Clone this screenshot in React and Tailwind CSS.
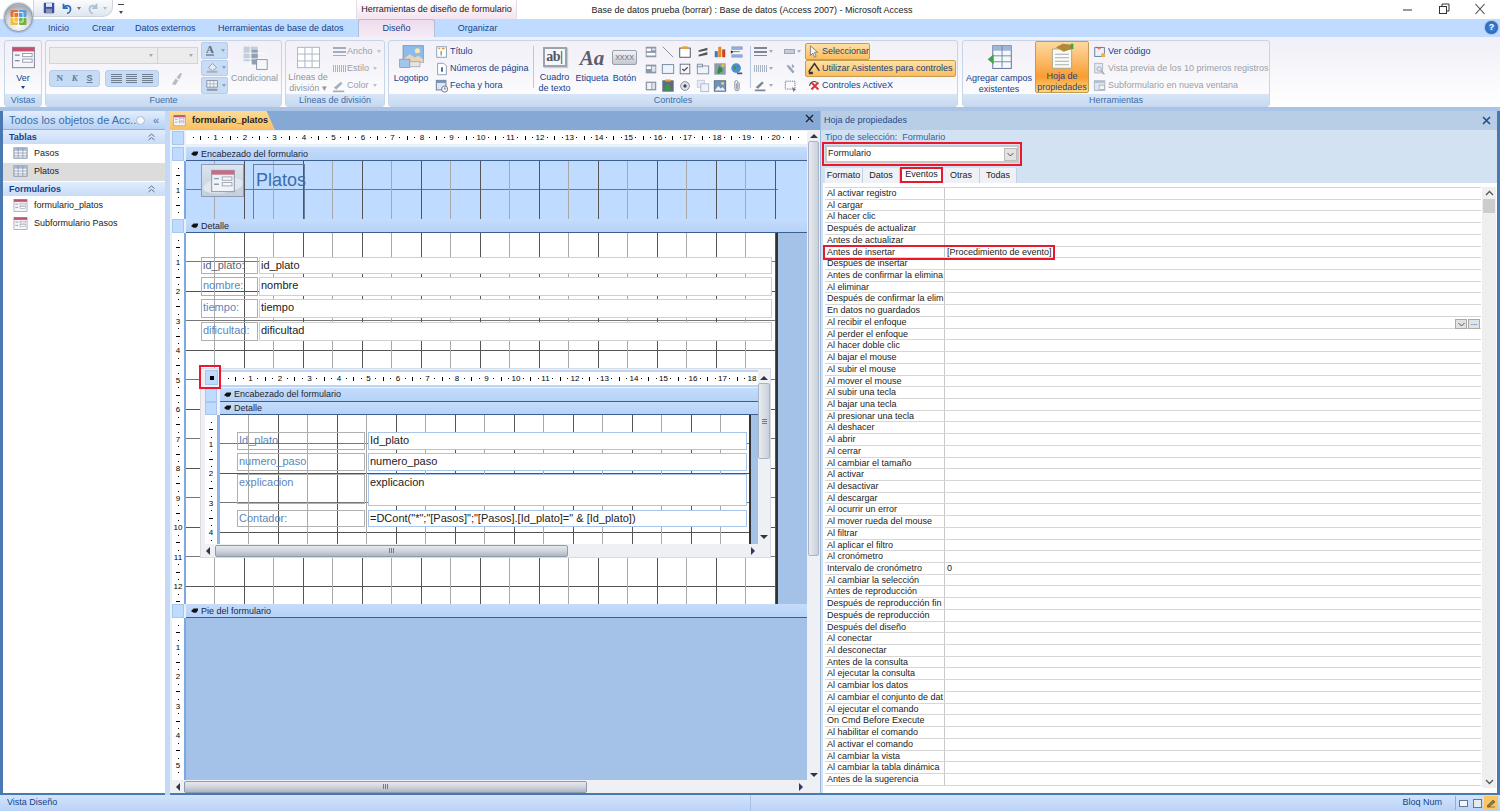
const GRID =
  "bg-[linear-gradient(to_right,transparent_28.5px,#a8a8a8_28.5px,#a8a8a8_29.5px,transparent_29.5px,transparent_58px,#555_58px),linear-gradient(to_bottom,transparent_28.5px,#777_28.5px,#777_29.5px,transparent_29.5px,transparent_58px,#555_58px)] bg-[size:59px_59px]";

const EVENTS = [
  "Al activar registro", "Al cargar", "Al hacer clic", "Después de actualizar", "Antes de actualizar",
  "Antes de insertar", "Después de insertar", "Antes de confirmar la elimina", "Al eliminar",
  "Después de confirmar la elim", "En datos no guardados", "Al recibir el enfoque", "Al perder el enfoque",
  "Al hacer doble clic", "Al bajar el mouse", "Al subir el mouse", "Al mover el mouse", "Al subir una tecla",
  "Al bajar una tecla", "Al presionar una tecla", "Al deshacer", "Al abrir", "Al cerrar", "Al cambiar el tamaño",
  "Al activar", "Al desactivar", "Al descargar", "Al ocurrir un error", "Al mover rueda del mouse", "Al filtrar",
  "Al aplicar el filtro", "Al cronómetro", "Intervalo de cronómetro", "Al cambiar la selección",
  "Antes de reproducción", "Después de reproducción fin", "Después de reproducción", "Después del diseño",
  "Al conectar", "Al desconectar", "Antes de la consulta", "Al ejecutar la consulta", "Al cambiar los datos",
  "Al cambiar el conjunto de dat", "Al ejecutar el comando", "On Cmd Before Execute", "Al habilitar el comando",
  "Al activar el comando", "Al cambiar la vista", "Al cambiar la tabla dinámica", "Antes de la sugerencia",
];

function Svg({ s = 16, children, className = "" }) {
  return (
    <svg width={s} height={s} viewBox="0 0 16 16" className={`shrink-0 ${className}`}>
      {children}
    </svg>
  );
}

function FormIcon({ s = 16 }) {
  return (
    <Svg s={s}>
      <rect x="1" y="1.5" width="14" height="13" fill="#f4f6fa" stroke="#8a92a5" strokeWidth="0.7" />
      <rect x="1" y="1.5" width="14" height="2.6" fill="#c2506f" />
      <path d="M2.5 6.5h3M2.5 10h3" stroke="#7d8798" strokeWidth="0.8" />
      <rect x="7.5" y="5.5" width="6" height="2" fill="#fff" stroke="#7d8798" strokeWidth="0.5" />
      <rect x="7.5" y="9" width="6" height="2" fill="#fff" stroke="#7d8798" strokeWidth="0.5" />
    </Svg>
  );
}

function TableIcon() {
  return (
    <Svg s={15}>
      <rect x="1" y="2" width="14" height="11" fill="#f3f6fb" stroke="#7f8ea6" />
      <rect x="1" y="2" width="14" height="3" fill="#a5b7d3" />
      <path d="M5.5 2v11M10.5 2v11M1 7.5h14M1 10.5h14" stroke="#7f8ea6" strokeWidth="0.7" />
    </Svg>
  );
}

function Caret({ className = "" }) {
  return <span className={`inline-block w-0 h-0 border-x-[2.5px] border-x-transparent border-t-[3px] border-t-current ${className}`} />;
}

function SmallBtn({ icon, label, off, caret, active, w }) {
  return (
    <div
      className={`flex items-center h-[17px] gap-[1px] px-[2px] whitespace-nowrap rounded-[2px] ${off ? "text-[#9a9fa8]" : "text-[#15428b]"} ${active ? "bg-[linear-gradient(#fde2a6,#fbbd5e)] border border-[#c79c4e] !text-[#1d3f7a]" : ""} ${w || ""}`}
    >
      {icon}
      <span>{label}</span>
      {caret && <Caret className="ml-[3px] opacity-60" />}
    </div>
  );
}

function BigBtn({ icon, lines, w, off }) {
  return (
    <div className={`${w} h-[52px] flex flex-col items-center pt-[3px] leading-[10.500px] text-center ${off ? "text-[#8f96a0]" : "text-[#15428b]"}`}>
      <div className="h-[27px] flex items-center justify-center">{icon}</div>
      <div className="mt-[2px]">
        {lines.map((l) => (
          <div key={l} className="whitespace-nowrap">{l}</div>
        ))}
      </div>
    </div>
  );
}

function Group({ w, label, children }) {
  return (
    <div className={`${w} h-[67px] flex flex-col rounded-[3px] border border-[#c6d5e8] bg-[linear-gradient(#f3f0f8,#f6f5fa_45%,#ffffff)] overflow-hidden shrink-0`}>
      <div className="h-[53px] flex">{children}</div>
      <div className="flex-1 bg-[linear-gradient(#d7e5f6,#c6daf2)] text-center text-[#3e6cab] leading-[12px]">{label}</div>
    </div>
  );
}

function Sep() {
  return <div className="w-px h-[42px] mt-[5px] bg-[#b9cbe2] shrink-0" />;
}

// tiny icons of the Controles grid, row by row
const G = "#6d7788";
const CONTROL_ICONS = [
  <><rect x="2" y="2" width="12" height="12" fill="#8b98ab" /><rect x="3" y="4" width="5" height="3" fill="#fff" /><rect x="9" y="4" width="4" height="2" fill="#dfe6f0" /><rect x="3" y="9" width="10" height="3" fill="#fff" /></>,
  <path d="M2 2l12 12" stroke={G} strokeWidth="0.9" />,
  <><rect x="2" y="3.5" width="12" height="10.5" fill="#fff" stroke="#444" /><rect x="5" y="1.5" width="6" height="3" fill="#e8a33a" /></>,
  <path d="M3 6l10-3v3l-10 2zM3 11l10-3v3l-10 2z" fill="#555" />,
  <><rect x="2" y="7" width="3.5" height="7" fill="#3a78c9" /><rect x="6" y="2" width="3.5" height="12" fill="#e58b1f" /><rect x="10.500" y="5" width="3.5" height="9" fill="#c9431f" /></>,
  <><path d="M2 2h12v3H2zM2 11h12v3H2z" fill="#8fb1de" stroke="#6482ad" strokeWidth="0.5" /><path d="M2 7.500h9" stroke="#777" /><path d="M1 6l3 2-3 2z" fill="#333" /></>,
  <><rect x="2" y="3" width="12" height="10" fill="#8b98ab" /><rect x="3" y="5" width="5" height="3" fill="#fff" /><rect x="9" y="5" width="4" height="6" fill="#dfe6f0" /></>,
  <rect x="1.500" y="3" width="13" height="10" fill="#eef4fc" stroke="#69809f" />,
  <><rect x="2.500" y="2.500" width="11" height="11" fill="#f6f6f6" stroke="#667" /><path d="M5 8l2 2 4-4" stroke="#445" fill="none" strokeWidth="1.300" /></>,
  <><rect x="1.500" y="4.500" width="13" height="9" fill="#eef3fa" stroke="#7a8ba3" /><rect x="1.500" y="2.500" width="6" height="3" fill="#dfe7f3" stroke="#7a8ba3" /></>,
  <><rect x="1.500" y="1.500" width="13" height="13" fill="#8e9aac" /><path d="M5 13c0-4 1-7 3-9 0 3 3 2 3 5s-3 2-3 4z" fill="#2e8f3a" /><rect x="10" y="2.500" width="3" height="3" fill="#e9c54a" /></>,
  <><circle cx="7" cy="7" r="5.500" fill="#4f8fd6" /><path d="M4 4c2 0 3 1 3 3S5 9 4 8zM8 3l3 2-2 2z" fill="#3e9a4c" /><path d="M8 12h6v2H8z" fill="#556" /></>,
  <><rect x="2" y="3" width="12" height="10" fill="#8b98ab" /><rect x="3.500" y="4.500" width="5" height="7" fill="#f3f3f3" /><rect x="9.500" y="4.500" width="3" height="7" fill="#dfe6f0" /></>,
  <><rect x="1.500" y="1.500" width="13" height="13" fill="#5f6c7f" /><path d="M4 13c0-4 2-7 4-8 1 3 4 4 3 8z" fill="#3c9a46" /><rect x="5" y="0.500" width="6" height="2.500" fill="#e2a23a" /></>,
  <><circle cx="8" cy="8" r="5" fill="#dfe3ea" stroke="#7b8596" /><circle cx="8" cy="8" r="2" fill="#3e4a5c" /></>,
  <><rect x="1.500" y="1.500" width="8" height="8" fill="#e6ecf5" stroke="#c3ccd9" /><rect x="5.500" y="5.500" width="9" height="9" fill="#eef2f8" stroke="#a9b5c6" /></>,
  <><rect x="1.500" y="2" width="13" height="12" fill="#6f93bf" stroke="#5a6a80" /><path d="M2 13l4-5 3 3 2-2 3 4z" fill="#f2f2f2" /><circle cx="11" cy="5" r="1.500" fill="#f5d76a" /></>,
  <path d="M10.500 4v7a2.500 2.500 0 0 1-5 0V3.500a1.700 1.700 0 0 1 3.400 0V11a.8.8 0 0 1-1.600 0V5" fill="none" stroke="#7c8798" strokeWidth="1" />,
];

function OfficeOrb() {
  return (
    <div className="absolute left-[4px] top-[3px] w-[29px] h-[29px] rounded-full border border-[#8b96a5] bg-[radial-gradient(circle_at_50%_75%,#ffffff,#d6dbe3_45%,#a4acb8_75%,#eef0f4)] flex items-center justify-center shadow-[0_0_2px_#6f7c8c]">
      <svg width="19" height="19" viewBox="0 0 19 19">
        <rect x="1.500" y="2" width="7.500" height="7" rx="1" fill="#e8722a" />
        <rect x="10" y="2" width="7.500" height="7" rx="1" fill="#5c9ad8" />
        <rect x="1.500" y="10" width="7.500" height="7" rx="1" fill="#f1c232" />
        <rect x="10" y="10" width="7.500" height="7" rx="1" fill="#73b33e" />
        <path d="M5 4.500h9M5 14h9M5 4.500v9.500M14 4.500v9.500" stroke="#fff" strokeWidth="0.8" fill="none" />
      </svg>
    </div>
  );
}

function TitleBar() {
  return (
    <div className="h-[19px] flex bg-white shrink-0">
      <div className="w-[33px] shrink-0" />
      <div className="w-[80px] h-[17px] shrink-0 flex items-center gap-[3px] pl-[9px] rounded-br-[10px] border border-t-0 border-[#cdd5e0] bg-[linear-gradient(#fafbfd,#dfe6f0)]">
        <Svg s={12}>
          <rect x="1" y="1" width="14" height="14" rx="1" fill="#3d4f9e" />
          <rect x="4" y="1.500" width="8" height="5" fill="#dfe6f5" />
          <rect x="4" y="9" width="8" height="6" fill="#8a93b8" />
        </Svg>
        <Svg s={14} className="ml-[2px]">
          <path d="M4 3v5h5M4.500 7.500C7 4 12 5 12 9s-3 5-4 5" fill="none" stroke="#2f6cb8" strokeWidth="2" />
        </Svg>
        <Caret className="text-[#777]" />
        <Svg s={14} className="ml-[2px]">
          <path d="M12 3v5H7M11.500 7.500C9 4 4 5 4 9s3 5 4 5" fill="none" stroke="#a9bdd3" strokeWidth="2" />
        </Svg>
        <Caret className="text-[#bbb]" />
      </div>
      <div className="w-[243px] shrink-0 pl-[5px] pt-[4px]">
        <div className="w-[6px] h-px bg-[#445]" />
        <Caret className="block text-[#445] mt-px ml-[0.5px]" />
      </div>
      <div className="w-[161px] shrink-0 border-x border-[#e3dfe8] bg-[linear-gradient(#ffffff,#f4e3ee)] text-[#222] text-center leading-[19px] whitespace-nowrap">
        Herramientas de diseño de formulario
      </div>
      <div className="w-[470px] shrink-0 text-center text-[#222] leading-[20px] whitespace-nowrap">
        Base de datos prueba (borrar) : Base de datos (Access 2007) - Microsoft Access
      </div>
      <div className="flex-1 flex justify-end items-start pr-[13px] pt-[3px] gap-[22px] text-[#333]">
        <svg width="14" height="12" viewBox="0 0 14 12"><path d="M2 7h9" stroke="#555" strokeWidth="1.200" /></svg>
        <svg width="14" height="12" viewBox="0 0 14 12"><path d="M5 3V1h7v7h-2" fill="none" stroke="#333" /><rect x="2.500" y="3.500" width="7" height="7" fill="none" stroke="#333" /></svg>
        <svg width="14" height="12" viewBox="0 0 14 12"><path d="M2.500 1l9 10M11.500 1l-9 10" stroke="#444" strokeWidth="1.100" /></svg>
      </div>
    </div>
  );
}

function TabRow() {
  return (
    <div className="h-[18px] flex bg-[#bfdbff] text-[#15428b] shrink-0 leading-[18px] whitespace-nowrap relative">
      <div className="w-[48px]" />
      <div className="w-[44px]">Inicio</div>
      <div className="w-[43px]">Crear</div>
      <div className="w-[83px]">Datos externos</div>
      <div className="w-[140px]">Herramientas de base de datos</div>
      <div className="w-[77px] h-[18px] text-center border border-b-0 border-[#b3bfd8] rounded-t-[3px] bg-[linear-gradient(#efdcec,#f4ebf6)] leading-[17px]">Diseño</div>
      <div className="w-[85px] text-center">Organizar</div>
      <div className="flex-1 flex justify-end pr-[1px] pt-[1px]">
        <div className="w-[15px] h-[15px] rounded-full bg-[radial-gradient(circle,#4a8cdc,#1d58a8)] border border-[#a9c3e6] text-white text-[9px] leading-[13px] text-center font-bold">?</div>
      </div>
    </div>
  );
}

function Ribbon() {
  return (
    <div className="h-[70px] flex pt-[3px] pl-[4px] gap-[3px] bg-[linear-gradient(#f1eff7,#ffffff)] text-[#15428b] shrink-0">
      <Group w="w-[38px]" label="Vistas">
        <div className="w-full flex flex-col items-center pt-[4px] leading-[12px]">
          <FormIcon s={25} />
          <div className="mt-[2px]">Ver</div>
          <Caret className="mt-[2px]" />
        </div>
      </Group>

      <Group w="w-[237px]" label="Fuente">
        <div className="w-[155px] pl-[3px] pt-[6px] shrink-0">
          <div className="flex">
            <div className="w-[109px] h-[17px] border border-[#cfd5dd] bg-[#ececec] flex justify-end items-center pr-[4px] text-[#aaa]"><Caret /></div>
            <div className="w-[40px] h-[17px] border border-l-0 border-[#cfd5dd] bg-[#ececec] flex justify-end items-center pr-[4px] text-[#aaa]"><Caret /></div>
          </div>
          <div className="flex mt-[6px] gap-[5px]">
            <div className="w-[51px] h-[17px] rounded-[3px] border border-[#b7cde9] bg-[#c5dbf6] flex items-center justify-around px-[2px] font-bold text-[#6b7a8d]">
              <span className="[font-family:'Liberation_Serif',serif]">N</span>
              <span className="italic [font-family:'Liberation_Serif',serif]">K</span>
              <span className="underline">S</span>
            </div>
            <div className="w-[54px] h-[17px] rounded-[3px] border border-[#b7cde9] bg-[#c5dbf6] flex items-center justify-around px-[3px]">
              {["w-[11px]", "w-[11px]", "w-[11px]"].map((c, i) => (
                <div key={i} className={`${c} h-[9px] bg-[repeating-linear-gradient(#6f7d90_0_1px,transparent_1px_2px)]`} />
              ))}
            </div>
            <Svg s={15} className="ml-[5px] mt-px">
              <path d="M3 14l4-6 3 2-3 5zM8 7l4-5 2 1-3 6z" fill="#b6bdc8" />
            </Svg>
          </div>
        </div>
        <div className="w-[27px] pt-px flex flex-col gap-px shrink-0">
          {[
            <span key="a" className="font-bold text-[#5d6c80] text-[11px] leading-[10px] [font-family:'Liberation_Serif',serif] border-b-2 border-[#8d97a6]">A</span>,
            <Svg key="b" s={13}><path d="M3 8l5-5 5 5-5 4z" fill="#e7ecf3" stroke="#8994a5" /><rect x="1" y="12" width="13" height="2.500" fill="#a8b1bd" /></Svg>,
            <Svg key="c" s={13}><rect x="1" y="2" width="13" height="8" fill="#f0f3f8" stroke="#7e8899" /><path d="M5 2v8M9.500 2v8M1 6h13" stroke="#7e8899" strokeWidth="0.6" /><rect x="1" y="12" width="13" height="2.500" fill="#8d97a6" /></Svg>,
          ].map((ic, i) => (
            <div key={i} className="h-[16.500px] rounded-[2px] border border-[#b7cde9] bg-[#c8dcf5] flex items-center gap-[3px] pl-[4px] text-[#8ea0b8]">
              {ic}
              <Caret className="ml-auto mr-[2px]" />
            </div>
          ))}
        </div>
        <div className="flex-1">
          <BigBtn
            w="w-full"
            off
            lines={["Condicional"]}
            icon={
              <Svg s={26}>
                <rect x="1" y="1" width="9" height="9" fill="#c3cddb" />
                <rect x="6" y="3" width="4" height="9" fill="#8fa0b6" />
                <path d="M1 5h14M1 8.500h14M5 1v13M10 1v13" stroke="#fff" strokeWidth="0.5" />
                <rect x="9" y="9" width="6.500" height="6" fill="#f4f6f9" stroke="#7d8898" strokeWidth="0.5" />
              </Svg>
            }
          />
        </div>
      </Group>

      <Group w="w-[100px]" label="Líneas de división">
        <BigBtn
          w="w-[44px] shrink-0"
          off
          lines={["Líneas de", "división ▾"]}
          icon={
            <Svg s={25}>
              <rect x="1" y="1.500" width="14" height="13" fill="#fff" stroke="#a9b3c1" strokeWidth="0.6" />
              <path d="M5.700 1.500v13M10.300 1.500v13M1 5.800h14M1 10.200h14" stroke="#a9b3c1" strokeWidth="0.6" />
            </Svg>
          }
        />
        <div className="pt-[2px]">
          <SmallBtn off caret label="Ancho" icon={<div className="w-[13px] h-[9px] ml-px bg-[repeating-linear-gradient(#a3adbb_0_2px,transparent_2px_4px)]" />} />
          <SmallBtn off caret label="Estilo" icon={<div className="w-[13px] h-[7px] ml-px bg-[repeating-linear-gradient(90deg,#a8b4c5_0_1px,transparent_1px_2px)]" />} />
          <SmallBtn off caret label="Color" icon={<Svg s={14}><path d="M2 10l8-7 2 2-7 7zM1 13h13v2H1z" fill="#a6afbb" /></Svg>} />
        </div>
      </Group>

      <Group w="w-[570px]" label="Controles">
        <BigBtn
          w="w-[44px] shrink-0"
          lines={["Logotipo"]}
          icon={
            <Svg s={27}>
              <rect x="3" y="1" width="12" height="10" fill="#8dbbec" stroke="#7990ad" strokeWidth="0.5" />
              <path d="M3 9l4-3 3 2 2-1 3 2v2H3z" fill="#e9d5b6" />
              <circle cx="11.500" cy="4" r="1.500" fill="#fbe9a0" />
              <rect x="1" y="9" width="6" height="5" fill="#a5c6ec" stroke="#7990ad" strokeWidth="0.4" />
              <rect x="7" y="10.500" width="6" height="3" fill="#e4e4e4" stroke="#99a" strokeWidth="0.4" />
            </Svg>
          }
        />
        <div className="w-[96px] pt-[2px] shrink-0">
          <SmallBtn label="Título" icon={<Svg s={14}><rect x="2" y="2" width="11" height="12" fill="#fff" stroke="#8494a9" /><path d="M4 4h2M8 4h3" stroke="#d59a2d" strokeWidth="1.500" /><path d="M7 7v5" stroke="#555" /></Svg>} />
          <SmallBtn label="Números de página" icon={<Svg s={14}><path d="M3 1.500h7l3 3v10H3z" fill="#fff" stroke="#8494a9" /><path d="M7 6h2v5H7z" fill="#3a5f9e" /></Svg>} />
          <SmallBtn label="Fecha y hora" icon={<Svg s={14}><rect x="1.500" y="1.500" width="11" height="11" fill="#dde7f5" stroke="#5d7191" /><rect x="1.500" y="1.500" width="11" height="3" fill="#7b93b8" /><circle cx="11" cy="11.500" r="3.500" fill="#f3f5f9" stroke="#5d7191" /><path d="M11 9.500v2h1.500" stroke="#334" strokeWidth="0.7" fill="none" /></Svg>} />
        </div>
        <div className="w-[4px] shrink-0" />
        <Sep />
        <BigBtn
          w="w-[41px] shrink-0"
          lines={["Cuadro", "de texto"]}
          icon={<div className="w-[24px] h-[20px] border-2 border-[#9aa3af] bg-[#f7f7f7] text-[#4d5563] font-bold text-[14px] leading-[15px] text-center [font-family:'Liberation_Serif',serif] tracking-[-0.5px] shadow-[1px_1px_1px_#ccc]">ab|</div>}
        />
        <BigBtn w="w-[34px] shrink-0" lines={["Etiqueta"]} icon={<span className="italic font-bold text-[21px] leading-[24px] text-[#5a5f68] [font-family:'Liberation_Serif',serif]">Aa</span>} />
        <BigBtn w="w-[31px] shrink-0" lines={["Botón"]} icon={<div className="w-[25px] h-[15px] rounded-[2px] border border-[#98a1ad] bg-[linear-gradient(#f0f1f3,#c4c9d0)] text-[7px] leading-[13px] text-center text-[#667]">XXXX</div>} />
        <div className="w-[106px] pl-[2px] pt-[2px] grid grid-cols-6 grid-rows-3 shrink-0">
          {CONTROL_ICONS.map((ic, i) => (
            <div key={i} className="w-[17px] h-[17px] flex items-center justify-center">
              <Svg s={14}>{ic}</Svg>
            </div>
          ))}
        </div>
        <div className="w-[4px] shrink-0" />
        <Sep />
        <div className="w-[54px] pl-[3px] pt-[2px] grid grid-cols-2 shrink-0">
          <div className="h-[17px] flex items-center gap-[2px] text-[#aab]"><div className="w-[13px] h-[9px] bg-[repeating-linear-gradient(#7d8797_0_2px,transparent_2px_4px)]" /><Caret /></div>
          <div className="h-[17px] flex items-center gap-[2px] text-[#aab] pl-[4px]"><div className="w-[11px] h-[5px] bg-[#c4cedb] border border-[#9aa7b8]" /><Caret /></div>
          <div className="h-[17px] flex items-center gap-[2px] text-[#aab]"><div className="w-[13px] h-[7px] bg-[repeating-linear-gradient(90deg,#a8b4c5_0_1px,transparent_1px_2px)]" /><Caret /></div>
          <div className="h-[17px] flex items-center pl-[4px]"><Svg s={14}><path d="M3 3l3 1 6 7-2 2-6-7zM9 2l3 3-3 2z" fill="#9ba6b5" /></Svg></div>
          <div className="h-[17px] flex items-center gap-[2px] text-[#aab]"><Svg s={13}><path d="M2 10l8-7 2 2-7 7zM1 13h13v2H1z" fill="#7d8797" /></Svg><Caret /></div>
          <div className="h-[17px] flex items-center pl-[4px]"><Svg s={14}><rect x="1.500" y="2.500" width="11" height="9" fill="none" stroke="#667" strokeDasharray="1.500 1" /><path d="M9 9l5 3-2 1-1 2z" fill="#778" /></Svg></div>
        </div>
        <div className="flex-1 pt-[2px] min-w-0">
          <div className="w-[65px]">
            <SmallBtn active label="Seleccionar" icon={<Svg s={13}><path d="M3 1l9 8H8l2 5-2 1-2-5-3 3z" fill="#f4f5f8" stroke="#556" strokeWidth="0.8" /></Svg>} />
          </div>
          <div className="w-[151px]">
            <SmallBtn active label="Utilizar Asistentes para controles" icon={<Svg s={13}><path d="M1 12L8 2l6 9" fill="none" stroke="#333" strokeWidth="1.800" /><rect x="1" y="12" width="5" height="3" fill="#333" /></Svg>} />
          </div>
          <SmallBtn label="Controles ActiveX" icon={<Svg s={14}><path d="M3 8a5 5 0 0 1 8-4" fill="none" stroke="#444" strokeWidth="1.200" /><path d="M5 4l8 8M13 4l-8 8" stroke="#d33" strokeWidth="2.200" /></Svg>} />
        </div>
      </Group>

      <Group w="w-[308px] ml-px" label="Herramientas">
        <BigBtn
          w="w-[72px] shrink-0"
          lines={["Agregar campos", "existentes"]}
          icon={
            <Svg s={27}>
              <rect x="4" y="1" width="11" height="13.500" fill="#f4f7fb" stroke="#667c9a" strokeWidth="0.6" />
              <rect x="4" y="1" width="11" height="3" fill="#9fb6d6" />
              <path d="M9.500 1v13M4 7h11M4 10.500h11" stroke="#667c9a" strokeWidth="0.5" />
              <path d="M1 9l3.500-3v6z" fill="#3aa845" />
            </Svg>
          }
        />
        <div className="w-[54px] h-[52px] shrink-0 border border-[#c49b50] rounded-[2px] bg-[linear-gradient(#fdd9a0,#fbb35c_45%,#fa9c30_70%,#fcd784)] flex flex-col items-center text-[#23467f] leading-[10.500px] text-center whitespace-nowrap">
          <Svg s={28}>
            <path d="M2.500 4h11v11h-11z" fill="#fbfbf6" stroke="#a39f8d" strokeWidth="0.5" />
            <path d="M4 7h8M4 9h8M4 11h8M4 13h8" stroke="#a7adb8" strokeWidth="0.6" />
            <path d="M4.500 3l4-2 5 .5V4L9 5.500z" fill="#b08a3a" />
            <rect x="13" y="1" width="1.500" height="3" fill="#3aa845" />
          </Svg>
          <div className="mt-[1px]">Hoja de</div>
          <div>propiedades</div>
        </div>
        <div className="pl-[2px] pt-[2px]">
          <SmallBtn label="Ver código" icon={<Svg s={14}><rect x="2" y="3" width="11" height="10" fill="#eef2f8" stroke="#5f7394" /><path d="M4 2l3 3M10 2L7 5" stroke="#c33" /><circle cx="11.500" cy="11.500" r="2.500" fill="#e9b73e" /></Svg>} />
          <SmallBtn off label="Vista previa de los 10 primeros registros" icon={<Svg s={14}><rect x="2" y="1.500" width="9" height="11" fill="#e5eaf2" stroke="#aab4c3" /><circle cx="7" cy="8" r="2.500" fill="none" stroke="#9aa6b7" /><path d="M9 10l4 4" stroke="#9aa6b7" strokeWidth="1.500" /></Svg>} />
          <SmallBtn off label="Subformulario en nueva ventana" icon={<Svg s={14}><rect x="1.500" y="2" width="12" height="11" fill="#dfe6ef" stroke="#a7b2c2" /><rect x="1.500" y="2" width="12" height="2.500" fill="#b5c0cf" /><rect x="7" y="7" width="6" height="5" fill="#f3f5f9" stroke="#a7b2c2" /></Svg>} />
        </div>
      </Group>
    </div>
  );
}

function NavSection({ label }) {
  return (
    <div className="h-[14px] flex items-center justify-between pl-[6px] pr-[10px] bg-[linear-gradient(#e0ecfc,#c9dcf7)] text-[#15428b] font-bold leading-[14px]">
      <span>{label}</span>
      <svg width="7" height="8" viewBox="0 0 7 8"><path d="M0.500 3.500l3-2.500 3 2.500M0.500 7l3-2.500 3 2.500" fill="none" stroke="#5c6f8c" /></svg>
    </div>
  );
}

function NavItem({ icon, label, on }) {
  return (
    <div className={`h-[18.500px] flex items-center pl-[10px] gap-[6px] text-[#222] ${on ? "bg-[#dcdcdc]" : ""}`}>
      {icon}
      <span>{label}</span>
    </div>
  );
}

function NavPane() {
  return (
    <div className="w-[162px] shrink-0 flex flex-col bg-white h-[682px]">
      <div className="h-[19px] flex items-center bg-[linear-gradient(#e3eefc,#b6d1f5)] border-b border-[#8eb0dc] pl-[6px] text-[#3a6ca8] text-[11px] whitespace-nowrap shrink-0">
        <span className="w-[126px]">Todos los objetos de Acc...</span>
        <span className="w-[9px] h-[9px] rounded-full bg-[#f4f7fb] border border-[#a9bcd6] ml-[1px]" />
        <span className="ml-[8px] leading-[11px] text-[#4f6f9c]">«</span>
      </div>
      <NavSection label="Tablas" />
      <NavItem icon={<TableIcon />} label="Pasos" />
      <NavItem on icon={<TableIcon />} label="Platos" />
      <div className="h-px" />
      <NavSection label="Formularios" />
      <NavItem icon={<FormIcon s={15} />} label="formulario_platos" />
      <NavItem icon={<FormIcon s={15} />} label="Subformulario Pasos" />
    </div>
  );
}

function HRuler({ n, w }) {
  return (
    <div className={`${w} h-[13px] bg-white flex pl-[3.700px] overflow-hidden shrink-0`}>
      {Array.from({ length: n }, (_, i) => (
        <div key={i} className="w-[29.500px] shrink-0 grid grid-cols-4 items-center justify-items-center">
          <div className="w-px h-px bg-black" />
          <div className="w-px h-[4px] bg-black" />
          <div className="w-px h-px bg-black" />
          <div className="text-[8px] leading-[13px] text-black">{i + 1 < n ? i + 1 : ""}</div>
        </div>
      ))}
    </div>
  );
}

function VRuler({ n, h, w = "w-[12px]" }) {
  return (
    <div className={`${w} ${h} bg-white pt-[3.700px] overflow-hidden shrink-0`}>
      {Array.from({ length: n }, (_, i) => (
        <div key={i} className="h-[29.500px] grid grid-rows-4 items-center justify-items-center">
          <div className="w-px h-px bg-black" />
          <div className="w-[4px] h-px bg-black" />
          <div className="w-px h-px bg-black" />
          <div className="text-[8px] leading-[8px] text-black">{i + 1 < n ? i + 1 : ""}</div>
        </div>
      ))}
    </div>
  );
}

function Band({ label, sub }) {
  return (
    <div className={`flex ${sub ? "h-[13.500px]" : "h-[14px]"} shrink-0`}>
      <div className="w-[12px] bg-[#bfdbff] border border-[#a9c7ee] shrink-0" />
      <div className={`${sub ? "w-[3px]" : "w-[2px]"} shrink-0`} />
      <div className={`flex-1 flex items-center gap-[3px] pt-px ${sub ? "pl-[4px]" : "pl-[5px]"} bg-[linear-gradient(#c5dcfb,#b6d2f8)] border-b border-[#3d5f8f] text-[#1d2633] leading-[13px] whitespace-nowrap`}>
        <svg width="7" height="8" viewBox="0 0 8 8" className="shrink-0"><path d="M0 4l3-3h5v2l-2 3H3z" fill="#111" /></svg>
        {label}
      </div>
    </div>
  );
}

function FieldLabel({ className, children, dark }) {
  return (
    <div className={`absolute border-[1.500px] border-[#b0b0b0] pl-[1px] ${dark ? "text-[#54657c]" : "text-[#5c86bd]"} text-[11px] leading-[14px] whitespace-nowrap ${className}`}>
      {children}
    </div>
  );
}

function FieldBox({ className, children, blue }) {
  return (
    <div className={`absolute bg-white border-[1.500px] ${blue ? "border-[#a9c5ea]" : "border-[#d0d0d0]"} pl-[1px] text-[#222] text-[11px] leading-[14px] whitespace-nowrap ${className}`}>
      {children}
    </div>
  );
}

function ScrollThumb({ w }) {
  return (
    <div className={`${w} h-[12px] rounded-[2px] border border-[#8c9bb2] bg-[linear-gradient(#e6e9ee,#cfd4dc_50%,#aeb6c2)] flex items-center justify-center gap-px shrink-0`}>
      <div className="w-px h-[5px] bg-[#778]" />
      <div className="w-px h-[5px] bg-[#778]" />
      <div className="w-px h-[5px] bg-[#778]" />
    </div>
  );
}

function ArrowL() {
  return <div className="w-0 h-0 border-y-[4px] border-y-transparent border-r-[4px] border-r-[#334]" />;
}

function ArrowR() {
  return <div className="w-0 h-0 border-y-[4px] border-y-transparent border-l-[4px] border-l-[#336]" />;
}

function Subform() {
  return (
    <div className="absolute left-[14px] top-[135px] w-[571px] h-[190px] flex bg-[#eef0f3] border border-[#d8dce2]">
      <div className="w-[557px] shrink-0 flex flex-col">
        <div className="h-[19px] flex shrink-0 pt-px">
          <div className="w-[4px] shrink-0" />
          <div className="w-[13px] h-[15px] shrink-0 bg-[#bfdbff] border border-[#a9c7ee] flex items-center justify-center">
            <div className="w-[4px] h-[4px] bg-black" />
          </div>
          <div className="w-[3px] shrink-0" />
          <div className="flex-1 min-w-0 h-[17px] border-y-2 border-[#bcd5f5] overflow-hidden">
            <HRuler n={19} w="w-full" />
          </div>
        </div>
        <div className="pl-[4px] flex flex-col shrink-0">
          <Band sub label="Encabezado del formulario" />
          <Band sub label="Detalle" />
        </div>
        <div className="flex flex-1 min-h-0 pl-[4px]">
          <VRuler n={5} h="h-full" />
          <div className="w-[3px] bg-[#8fb5e8] shrink-0" />
          <div className="flex-1 relative bg-[#a4c2e8] overflow-hidden">
            <div className={`w-[531px] h-full bg-white border-r-2 border-[#333] ${GRID}`} />
            <FieldLabel className="left-[17px] top-[17px] w-[128px] h-[18px]">Id_plato</FieldLabel>
            <FieldBox blue className="left-[148px] top-[17px] w-[379px] h-[18px]">Id_plato</FieldBox>
            <FieldLabel className="left-[17px] top-[38px] w-[128px] h-[18px]">numero_paso</FieldLabel>
            <FieldBox blue className="left-[148px] top-[38px] w-[379px] h-[18px]">numero_paso</FieldBox>
            <FieldLabel className="left-[17px] top-[59px] w-[128px] h-[30px]">explicacion</FieldLabel>
            <FieldBox blue className="left-[148px] top-[59px] w-[379px] h-[32px]">explicacion</FieldBox>
            <FieldLabel className="left-[17px] top-[95px] w-[128px] h-[17px]">Contador:</FieldLabel>
            <FieldBox blue className="left-[148px] top-[95px] w-[379px] h-[17px]">=DCont("*";"[Pasos]";"[Pasos].[Id_plato]=" &amp; [Id_plato])</FieldBox>
          </div>
        </div>
        <div className="h-[13px] flex items-center shrink-0 bg-[#eef0f3]">
          <div className="w-[14px] flex justify-center"><ArrowL /></div>
          <ScrollThumb w="w-[353px]" />
          <div className="flex-1 flex justify-end pr-[3px]"><ArrowR /></div>
        </div>
      </div>
      <div className="flex-1 flex flex-col items-center pt-[7px] pb-[18px]">
        <div className="w-0 h-0 border-x-[4px] border-x-transparent border-b-[4px] border-b-[#334]" />
        <div className="w-[12px] h-[76px] mt-[3px] rounded-[2px] border border-[#a9b5c6] bg-[linear-gradient(90deg,#e8ebf0,#c9d0da)] flex flex-col items-center justify-center gap-px">
          <div className="w-[5px] h-px bg-[#778]" />
          <div className="w-[5px] h-px bg-[#778]" />
          <div className="w-[5px] h-px bg-[#778]" />
        </div>
        <div className="mt-auto w-0 h-0 border-x-[4px] border-x-transparent border-t-[4px] border-t-[#334]" />
      </div>
    </div>
  );
}

function Designer() {
  return (
    <div className="w-[650px] shrink-0 flex flex-col h-[682px] bg-[#e8f0fb]">
      <div className="h-[19px] bg-[#86a8d4] flex shrink-0 relative">
        <div className="w-[105px] h-[19px] flex items-center gap-[6px] pl-[3px] font-bold text-[#222] bg-[linear-gradient(#fcdc98,#f9bf61)] [clip-path:polygon(0_0,92%_0,100%_100%,0_100%)] whitespace-nowrap">
          <FormIcon s={13} />
          formulario_platos
        </div>
        <svg width="9" height="9" viewBox="0 0 9 9" className="ml-auto mr-[6px] mt-[3px]"><path d="M1 1l7 7M8 1L1 8" stroke="#222" strokeWidth="1.300" /></svg>
      </div>
      <div className="flex flex-1 min-h-0 pl-[2px]">
        <div className="w-[635px] shrink-0 flex flex-col pt-px">
          <div className="flex h-[15px] shrink-0">
            <div className="w-[12px] h-[14px] bg-[#bfdbff] border border-[#a9c7ee]" />
            <div className="w-[2px]" />
            <HRuler n={21} w="w-[621px]" />
          </div>
          <div className="h-px shrink-0" />
          <Band label="Encabezado del formulario" />
          <div className="flex h-[58px] shrink-0">
            <VRuler n={2} h="h-[58px]" />
            <div className="w-[2px] bg-[#7ea8e0]" />
            <div className="flex-1 relative bg-[#bfdbff] overflow-hidden">
              <div className={`w-[592px] h-full ${GRID}`} />
              <div className="absolute left-[15px] top-[3px] w-[43px] h-[33px] border border-[#8f9bb0] bg-[linear-gradient(#dbe3ee,#c3cfdf)] flex items-center justify-center">
                <div className="absolute w-[40px] h-[15px] rounded-[50%] bg-[#e4e9f0] opacity-90 top-[13px] rotate-[-8deg]" />
                <div className="relative opacity-80"><FormIcon s={26} /></div>
              </div>
              <div className="absolute left-[67px] top-[3px] w-[52px] h-[56px] border border-[#6a7f9b] pl-[2px] text-[18px] leading-[26px] text-[#3d6daa] pt-[2px]">Platos</div>
            </div>
          </div>
          <Band label="Detalle" />
          <div className="flex h-[371px] shrink-0">
            <VRuler n={13} h="h-[371px]" />
            <div className="w-[2px] bg-[#7ea8e0]" />
            <div className="flex-1 relative bg-[#a4c2e8]">
              <div className={`w-[592px] h-full bg-white border-r-2 border-[#333] ${GRID}`} />
              <FieldLabel dark className="left-[15px] top-[24px] w-[57px] h-[17px]">id_plato:</FieldLabel>
              <FieldBox className="left-[73px] top-[24px] w-[513px] h-[17px]">id_plato</FieldBox>
              <FieldLabel className="left-[15px] top-[44px] w-[57px] h-[19px]">nombre:</FieldLabel>
              <FieldBox className="left-[73px] top-[44px] w-[513px] h-[19px]">nombre</FieldBox>
              <FieldLabel className="left-[15px] top-[66px] w-[57px] h-[19px]">tiempo:</FieldLabel>
              <FieldBox className="left-[73px] top-[66px] w-[513px] h-[19px]">tiempo</FieldBox>
              <FieldLabel className="left-[15px] top-[89px] w-[57px] h-[19px]">dificultad:</FieldLabel>
              <FieldBox className="left-[73px] top-[89px] w-[513px] h-[19px]">dificultad</FieldBox>
              <Subform />
              <div className="absolute left-[13px] top-[132px] w-[22px] h-[24px] border-[2px] border-[#e8192c]" />
            </div>
          </div>
          <Band label="Pie del formulario" />
          <div className="flex flex-1 min-h-0">
            <VRuler n={6} h="h-full" />
            <div className="w-[2px] bg-[#7ea8e0]" />
            <div className="flex-1 bg-[#a4c2e8]" />
          </div>
          <div className="h-[13px] flex shrink-0 items-center bg-[#eef0f3]">
            <div className="w-[12px] flex justify-center"><ArrowL /></div>
            <ScrollThumb w="w-[403px]" />
            <div className="flex-1 flex justify-end pr-[4px]"><ArrowR /></div>
          </div>
        </div>
        <div className="flex-1 flex flex-col items-center bg-[#eef0f3] pt-[4px] pb-[16px]">
          <div className="w-0 h-0 border-x-[4px] border-x-transparent border-b-[4px] border-b-[#334]" />
          <div className="w-[11px] h-[415px] mt-[3px] rounded-[2px] border border-[#a9b5c6] bg-[linear-gradient(90deg,#e8ebf0,#c9d0da)]" />
          <div className="mt-auto w-0 h-0 border-x-[4px] border-x-transparent border-t-[4px] border-t-[#334]" />
        </div>
      </div>
    </div>
  );
}

function PropRow({ label, value }) {
  return (
    <div className="h-[11.730px] flex border-b border-[#d6d6d6] leading-[11px] overflow-hidden">
      <div className="w-[120px] pl-[2px] whitespace-nowrap border-r border-[#c9c9c9] shrink-0 text-[#222]">{label}</div>
      <div className="pl-[2px] text-[#222]">{value}</div>
    </div>
  );
}

function PropertySheet() {
  return (
    <div className="w-[677px] h-[682px] shrink-0 flex flex-col bg-[#d3e2f3] border-l border-[#9bb8dc] pl-[2px] text-[#222]">
      <div className="h-[19px] -ml-[2px] pl-[3px] pr-[6px] flex items-center justify-between bg-[#b8cde6] text-[#1f4d8c] shrink-0">
        <span>Hoja de propiedades</span>
        <svg width="9" height="9" viewBox="0 0 9 9"><path d="M1 1l7 7M8 1L1 8" stroke="#1f4d8c" strokeWidth="1.600" /></svg>
      </div>
      <div className="h-[12px] leading-[12px] pl-[2px] mt-[1px] text-[#2f639f] shrink-0 whitespace-pre">Tipo de selección:  Formulario</div>
      <div className="w-[200px] h-[24px] -ml-px mt-[-1px] border-[2px] border-[#e8192c] p-px shrink-0">
        <div className="h-full border-[2px] border-[#c9c9c9] bg-white flex items-center pl-[1px]">
          <span className="flex-1">Formulario</span>
          <div className="w-[13px] h-[13px] bg-[#e3e3e3] border border-[#bbb] flex items-center justify-center">
            <svg width="7" height="5" viewBox="0 0 7 5"><path d="M0.500 1l3 3 3-3" fill="none" stroke="#555" /></svg>
          </div>
        </div>
      </div>
      <div className="flex h-[17px] items-end pl-[2px] shrink-0">
        {[["Formato", "w-[38px]"], ["Datos", "w-[37px]"]].map(([t, w]) => (
          <div key={t} className={`${w} h-[15px] bg-[#eef2f7] border-r border-[#c5d1e0] text-center leading-[15px]`}>{t}</div>
        ))}
        <div className="w-[43px] h-[16px] bg-white border-[2px] border-[#e8192c] text-center leading-[11px]">Eventos</div>
        {[["Otras", "w-[37px]"], ["Todas", "w-[37px]"]].map(([t, w]) => (
          <div key={t} className={`${w} h-[15px] bg-[#eef2f7] border-r border-[#c5d1e0] text-center leading-[15px]`}>{t}</div>
        ))}
      </div>
      <div className="relative flex-1 min-h-0 bg-white flex pt-[4px] pl-[2px] pb-[5px]">
        <div className="w-[656px] shrink-0 relative overflow-hidden border-t border-[#d6d6d6]">
          {EVENTS.map((e) => (
            <PropRow key={e} label={e} value={e === "Antes de insertar" ? "[Procedimiento de evento]" : e === "Intervalo de cronómetro" ? "0" : ""} />
          ))}
          <div className="absolute top-[129px] right-[1px] flex items-center h-[14px] gap-[1px]">
            <div className="w-[12px] h-[10px] bg-[#e2e2e2] border border-[#aaa] flex items-center justify-center">
              <svg width="7" height="5" viewBox="0 0 7 5"><path d="M0.500 1l3 3 3-3" fill="none" stroke="#555" /></svg>
            </div>
            <div className="w-[12px] h-[10px] bg-[#e2e2e2] border border-[#aaa] text-[8px] leading-[5px] text-center">...</div>
          </div>
        </div>
        <div className="w-[14px] bg-[#efefef] flex flex-col items-center pt-[3px] pb-[3px] shrink-0 ml-px">
          <svg width="9" height="6" viewBox="0 0 9 6"><path d="M1 5l3.500-3.500L8 5" fill="none" stroke="#555" strokeWidth="1.300" /></svg>
          <div className="w-[12px] h-[14px] mt-[3px] bg-[#cdcdcd]" />
          <svg width="9" height="6" viewBox="0 0 9 6" className="mt-auto"><path d="M1 1l3.500 3.500L8 1" fill="none" stroke="#555" strokeWidth="1.300" /></svg>
        </div>
        <div className="absolute left-0 top-[62px] w-[232px] h-[15px] border-[2px] border-[#e8192c]" />
      </div>
    </div>
  );
}

function StatusBar() {
  return (
    <div className="h-[16px] flex items-center bg-[linear-gradient(#d2e4fc,#b9d2f6)] pl-[7px] text-[#15428b] shrink-0">
      <span className="w-[743px]">Vista Diseño</span>
      <div className="w-px h-[16px] bg-[#a6c1e6]" />
      <span className="ml-auto mr-[13px]">Bloq Num</span>
      <div className="flex h-[14px] pr-[2px] border-l border-[#8eaedb]">
        <div className="w-[14px] flex items-center justify-center">
          <div className="w-[9px] h-[7px] bg-[#f2f5fa] border border-[#66788f]" />
        </div>
        <div className="w-[14px] flex items-center justify-center">
          <div className="w-[9px] h-[9px] bg-[#e6ebf3] border border-[#66788f]" />
        </div>
        <div className="w-[14px] bg-[#fbc562] flex items-center justify-center">
          <svg width="10" height="10" viewBox="0 0 10 10"><path d="M1 8l6-6 2 2-6 5zM1 9h8" stroke="#6b5a2c" fill="#8b7a4c" strokeWidth="0.7" /></svg>
        </div>
      </div>
    </div>
  );
}

export default function App() {
  return (
    <div className="relative w-[1500px] h-[811px] overflow-hidden bg-[#6a94c4] flex flex-col text-[9px] [font-family:'Liberation_Sans',sans-serif]">
      <TitleBar />
      <TabRow />
      <Ribbon />
      <div className="h-[4px] bg-[#a9c4e6] shrink-0" />
      <div className="flex-1 min-h-0 flex pl-[3px] bg-[#4a78b0]">
        <NavPane />
        <div className="w-[5px] shrink-0 bg-[#c3d9f6]" />
        <Designer />
        <PropertySheet />
      </div>
      <StatusBar />
      <OfficeOrb />
    </div>
  );
}
